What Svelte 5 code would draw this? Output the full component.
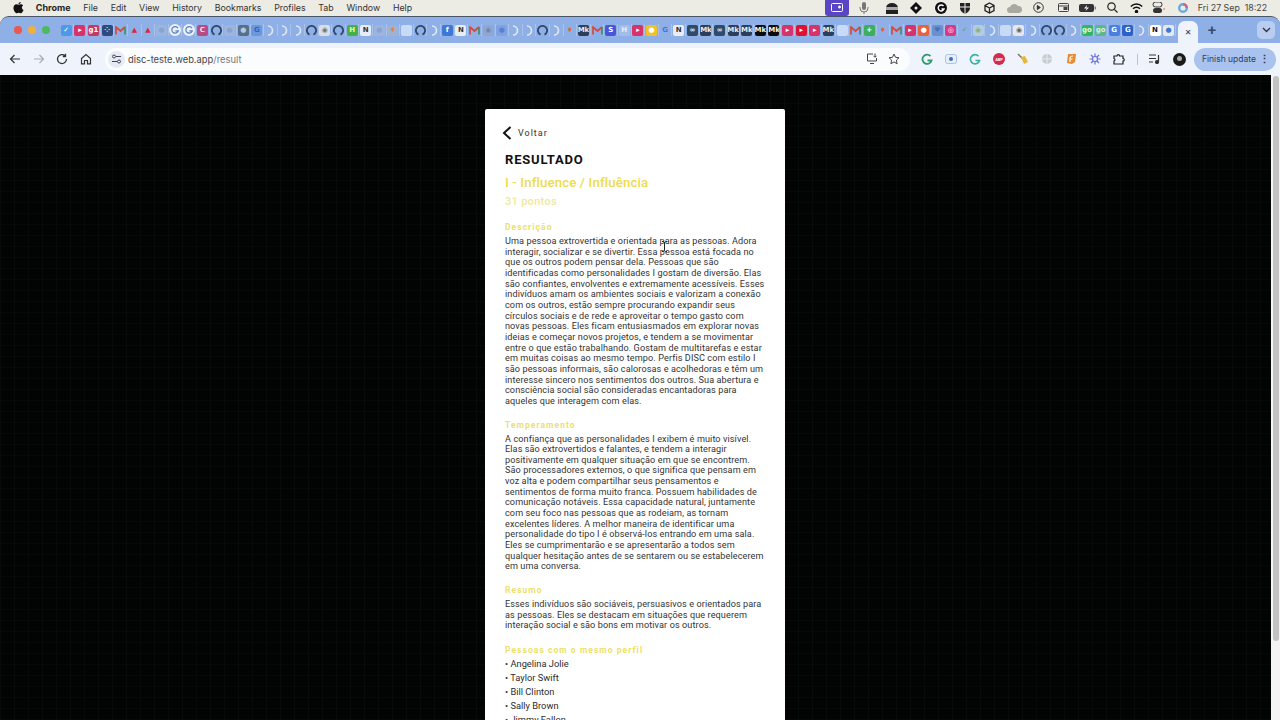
<script>
	const menu = ['File', 'Edit', 'View', 'History', 'Bookmarks', 'Profiles', 'Tab', 'Window', 'Help'];

	const sq = (bg, fg, t) => ({ k: 'sq', bg, fg, t });
	const moon = { k: 'moon' };
	const gh = { k: 'gh' };
	const dim = { k: 'dim' };
	const doc = { k: 'doc' };
	const g = { k: 'g' };
	const gmail = { k: 'gmail' };
	const mk = sq('#2b3f5c', '#e8edf2', 'Mk');
	const mkb = sq('#0c0c0c', '#f4f4e8', 'Mk');
	const yt = sq('#d8326a', '#fff', '▸');
	const notion = sq('#e8edf5', '#333', 'N');
	const inf = sq('#2f4a6b', '#dfe8f2', '∞');
	const santander = sq('#8fb0e6', '#d8283c', '▲');
	const flame = sq('#8fb0e6', '#e9662a', '♦');

	const tabs = [
		sq('#4f98e8', '#fff', '✓'), yt, sq('#c2386a', '#fff', 'g1'), sq('#2f4a7c', '#dfe8f2', '⁘'), gmail,
		santander, santander, dim, g, g, sq('#b84a86', '#f2dce8', 'C'), gh, dim, sq('#55708f', '#b8c8dc', '●'),
		sq('#6b98dc', '#2f62c4', 'G'), moon, moon, moon, gh, sq('#d8dfe8', '#777', '◉'), gh,
		sq('#45b048', '#f0f5a0', 'H'), notion, dim, sq('#9fb2d0', '#e8843c', '♦'), doc, gh, moon,
		sq('#3b78d8', '#fff', 'f'), notion, gmail, sq('#8fa8d2', '#6f87ad', '◉'), sq('#7fa2e0', '#5a80d4', '●'),
		moon, moon, gh, moon, flame, mk, gmail, sq('#4a55d8', '#fff', 'S'), sq('#a4bde8', '#e4ecf8', 'H'),
		yt, sq('#f0c428', '#fff', '●'), sq('#8fb0e6', '#3f78d8', 'G'), notion, inf, mk, inf, mk, mk, mkb, mkb,
		yt, sq('#e01030', '#fff', '▸'), yt, mk, doc, gmail, sq('#3fae5c', '#fff', '+'), flame, gmail, yt,
		sq('#e8603c', '#fff', '●'), sq('#6b90d0', '#4a70b8', '♥'), sq('#d8388c', '#fff', '◎'), sq('#8fb0e6', '#5f9a9a', '✓'),
		sq('#b4cce0', '#8cb07c', '◉'), moon, doc, sq('#e4e8ee', '#666', '◉'), moon, gh, gh, moon,
		sq('#30b860', '#e8f8e0', 'go'), sq('#5cb88a', '#d8f0e0', 'go'), sq('#4a80dc', '#fff', 'G'), sq('#2a62c8', '#fff', 'G'),
		moon, sq('#fff', '#111', 'N'), sq('#e8e8e8', '#3b78d8', '●')
	];

	const status = [
		{ x: 'mic' }, { x: 'badge' }, { x: 'diamond' }, { x: 'grammarly' }, { x: 'shield' }, { x: 'box' },
		{ x: 'cloud' }, { x: 'play' }, { x: 'window' }, { x: 'battery' }, { x: 'search' }, { x: 'wifi' },
		{ x: 'control' }, { x: 'siri' }
	];

	const description =
		'Uma pessoa extrovertida e orientada para as pessoas. Adora interagir, socializar e se divertir. Essa pessoa está focada no que os outros podem pensar dela. Pessoas que são identificadas como personalidades I gostam de diversão. Elas são confiantes, envolventes e extremamente acessíveis. Esses indivíduos amam os ambientes sociais e valorizam a conexão com os outros, estão sempre procurando expandir seus círculos sociais e de rede e aproveitar o tempo gasto com novas pessoas. Eles ficam entusiasmados em explorar novas ideias e começar novos projetos, e tendem a se movimentar entre o que estão trabalhando. Gostam de multitarefas e estar em muitas coisas ao mesmo tempo. Perfis DISC com estilo I são pessoas informais, são calorosas e acolhedoras e têm um interesse sincero nos sentimentos dos outros. Sua abertura e consciência social são consideradas encantadoras para aqueles que interagem com elas.';
	const temperament =
		'A confiança que as personalidades I exibem é muito visível. Elas são extrovertidos e falantes, e tendem a interagir positivamente em qualquer situação em que se encontrem. São processadores externos, o que significa que pensam em voz alta e podem compartilhar seus pensamentos e sentimentos de forma muito franca. Possuem habilidades de comunicação notáveis. Essa capacidade natural, juntamente com seu foco nas pessoas que as rodeiam, as tornam excelentes líderes. A melhor maneira de identificar uma personalidade do tipo I é observá-los entrando em uma sala. Eles se cumprimentarão e se apresentarão a todos sem qualquer hesitação antes de se sentarem ou se estabelecerem em uma conversa.';
	const summary =
		'Esses indivíduos são sociáveis, persuasivos e orientados para as pessoas. Eles se destacam em situações que requerem interação social e são bons em motivar os outros.';
	const people = ['Angelina Jolie', 'Taylor Swift', 'Bill Clinton', 'Sally Brown', 'Jimmy Fallon'];
</script>

<div class="screen">
	<header class="menubar">
		<svg class="apple" width="11" height="13" viewBox="0 0 24 28" fill="#111"><path d="M17 2c0 2-2 5-5 5 0-3 2-5 5-5zM12 8c1.500 0 3-1.200 5-1.200 2 0 4 1 5 2.800-4 2.400-3.400 8 1 10-1 3-3.500 7-6 7-1.500 0-2.500-1-4.200-1-1.800 0-2.800 1-4.300 1C5 26.600 1 20 1 15c0-5 3-8 6.500-8 1.800 0 3 1 4.500 1z"/></svg>
		<strong>Chrome</strong>
		{#each menu as item}<span>{item}</span>{/each}
		<div class="status">
			<span class="meet"><svg width="12" height="9" viewBox="0 0 12 9" fill="none" stroke="#fff"><rect x=".5" y=".5" width="11" height="8" rx="1"/><circle cx="8.500" cy="4" r="1" fill="#fff"/></svg></span>
			{#each status as s}
				<span class="st {s.x}">
					{#if s.x === 'mic'}
						<svg width="10" height="12" viewBox="0 0 10 12" fill="#777"><rect x="3" y="0" width="4" height="8" rx="2"/><path d="M1 5v1a4 4 0 0 0 8 0V5M5 10v2" stroke="#777" fill="none"/></svg>
					{:else if s.x === 'badge'}
						<svg width="14" height="12" viewBox="0 0 14 12"><path d="M1 6a6 5 0 0 1 12 0v6H1z" fill="#222"/><rect x="1" y="5" width="12" height="3" fill="#aaa"/></svg>
					{:else if s.x === 'diamond'}
						<svg width="12" height="12" viewBox="0 0 12 12"><path d="M6 0l6 6-6 6-6-6z" fill="#111"/><circle cx="6" cy="6" r="1.500" fill="#eee"/></svg>
					{:else if s.x === 'grammarly'}
						<svg width="12" height="12" viewBox="0 0 12 12"><circle cx="6" cy="6" r="6" fill="#111"/><path d="M8.500 4A3 3 0 1 0 9 7H6.500" stroke="#fff" fill="none" stroke-width="1.400"/></svg>
					{:else if s.x === 'shield'}
						<svg width="12" height="12" viewBox="0 0 12 12"><path d="M1 1h10v5c0 3-3 5-5 6-2-1-5-3-5-6z" fill="#222"/><path d="M6 1v11M1 5h10" stroke="#eee"/></svg>
					{:else if s.x === 'box'}
						<svg width="11" height="12" viewBox="0 0 11 12" fill="none" stroke="#222" stroke-width="1.300"><path d="M5.500 1l4.500 2.500v5L5.500 11 1 8.500v-5zM1 3.500L5.500 6 10 3.500M5.500 6v5"/></svg>
					{:else if s.x === 'cloud'}
						<svg width="17" height="10" viewBox="0 0 17 10"><path d="M4 10a3 3 0 0 1 0-6 4.500 4.500 0 0 1 8-1 3.500 3.500 0 0 1 1 7z" fill="#a9a9a4"/></svg>
					{:else if s.x === 'play'}
						<svg width="11" height="11" viewBox="0 0 11 11" fill="none" stroke="#333"><circle cx="5.500" cy="5.500" r="4.800"/><path d="M4.300 3.400l3 2.100-3 2.100z" fill="#333"/></svg>
					{:else if s.x === 'window'}
						<svg width="11" height="9" viewBox="0 0 11 9" fill="none" stroke="#444"><rect x=".5" y=".5" width="10" height="8" rx="1"/><path d="M.5 3h10"/><rect x="6" y="4.500" width="3" height="2" fill="#444"/></svg>
					{:else if s.x === 'battery'}
						<svg width="17" height="8" viewBox="0 0 17 8"><rect width="15" height="8" rx="2" fill="#333"/><rect x="15.500" y="2.500" width="1.500" height="3" fill="#888"/><path d="M8 1L5 4.500h2.500L6.500 7l3.500-3.500H7.500z" fill="#eee"/></svg>
					{:else if s.x === 'search'}
						<svg width="11" height="11" viewBox="0 0 11 11" fill="none" stroke="#222" stroke-width="1.200"><circle cx="4.500" cy="4.500" r="3.700"/><path d="M7.300 7.300L10.500 10.500"/></svg>
					{:else if s.x === 'wifi'}
						<svg width="13" height="10" viewBox="0 0 13 10" fill="none" stroke="#111" stroke-width="1.500"><path d="M.8 3.500a8 8 0 0 1 11.400 0M3 5.800a5 5 0 0 1 7 0"/><circle cx="6.500" cy="8.500" r="1" fill="#111"/></svg>
					{:else if s.x === 'control'}
						<svg width="13" height="11" viewBox="0 0 13 11"><rect x="1" y="0" width="9" height="5" rx="2.500" fill="none" stroke="#333"/><rect x="1" y="6" width="9" height="5" rx="2.500" fill="#333"/><circle cx="12" cy="7" r="1" fill="#e9a06a"/></svg>
					{:else}
						<svg width="10" height="10" viewBox="0 0 10 10" fill="none" stroke-width="2.400"><circle cx="5" cy="5" r="3.800" stroke="#6aa8dc"/><path d="M5 1.200A3.800 3.800 0 0 1 8.800 5" stroke="#d8608c"/></svg>
					{/if}
				</span>
			{/each}
			<span class="clock">Fri 27 Sep&nbsp;&nbsp;18:22</span>
		</div>
	</header>

	<section class="tabstrip">
		<div class="lights"><i class="red"></i><i class="amber"></i><i class="green"></i></div>
		<div class="favicons">
			{#each tabs as t}
				<span class="fav">
					{#if t.k === 'sq'}
						<b style="background:{t.bg};color:{t.fg}">{t.t}</b>
					{:else if t.k === 'moon'}
						<svg width="10" height="11" viewBox="0 0 10 11" fill="none" stroke="#dfe8f6" stroke-width="1.600"><path d="M3 1a4.500 4.500 0 0 1 0 9"/></svg>
					{:else if t.k === 'gh'}
						<svg width="11" height="11" viewBox="0 0 11 11" fill="none" stroke="#2f4668" stroke-width="1.800"><path d="M3.500 9.600a4.600 4.600 0 1 1 4 0"/></svg>
					{:else if t.k === 'dim'}
						<b style="background:#9cb5e0;color:#8aa3cc">●</b>
					{:else if t.k === 'doc'}
						<b style="background:#c8daf5;color:#c8daf5"> </b>
					{:else if t.k === 'g'}
						<svg width="12" height="12" viewBox="0 0 12 12"><circle cx="6" cy="6" r="6" fill="#edf1f6"/><path d="M9 4.200A3.300 3.300 0 1 0 9.300 6.800H6.300" fill="none" stroke="#5f86c4" stroke-width="1.300"/></svg>
					{:else}
						<svg width="11" height="9" viewBox="0 0 11 9" fill="none" stroke-width="1.700"><path d="M1 8.500V1l4.500 4L10 1" stroke="#d8483c"/><path d="M10 1v7.500" stroke="#3f8f68"/></svg>
					{/if}
				</span>
			{/each}
		</div>
		<div class="active-tab">✕</div>
		<div class="plus">+</div>
		<div class="chev"><svg width="9" height="6" viewBox="0 0 9 6" fill="none" stroke="#334" stroke-width="1.400"><path d="M1 1l3.500 3.500L8 1"/></svg></div>
	</section>

	<nav class="toolbar">
		<div class="navs">
			<svg width="12" height="12" viewBox="0 0 12 12" fill="none" stroke="#333" stroke-width="1.200"><path d="M11 6H1.500M5.500 2L1.500 6l4 4"/></svg>
			<svg width="12" height="12" viewBox="0 0 12 12" fill="none" stroke="#a6adb8" stroke-width="1.200"><path d="M1 6h9.500M6.500 2l4 4-4 4"/></svg>
			<svg width="12" height="12" viewBox="0 0 12 12" fill="none" stroke="#333" stroke-width="1.300"><path d="M10.500 6A4.500 4.500 0 1 1 9 2.700M9.500.8v2.700H6.800"/></svg>
			<svg width="12" height="12" viewBox="0 0 12 12" fill="none" stroke="#333" stroke-width="1.200"><path d="M1.500 5.500L6 1.500l4.500 4v5.300H7.500V7.500h-3v3.300h-3z"/></svg>
		</div>
		<div class="omnibox">
			<span class="tune"><svg width="11" height="10" viewBox="0 0 11 10" fill="none" stroke="#445" stroke-width="1"><circle cx="3" cy="2.500" r="1.500"/><path d="M5 2.500h5M1 7.500h5"/><circle cx="8" cy="7.500" r="1.500"/></svg></span>
			<span class="url">disc-teste.web.app<em>/result</em></span>
			<span class="omni-icons">
				<svg width="12" height="11" viewBox="0 0 12 11" fill="none" stroke="#444"><path d="M7 1H1.500v7h9V5M4 10.500h4M9 .5v3.500M7.500 2.800L9 4.300l1.500-1.500"/></svg>
				<svg width="12" height="12" viewBox="0 0 12 12" fill="none" stroke="#444"><path d="M6 1l1.500 3.300 3.500.4-2.600 2.400.7 3.600L6 8.900l-3.100 1.800.7-3.600L1 4.700l3.500-.4z"/></svg>
			</span>
		</div>
		<div class="exts">
			<svg width="12" height="12" viewBox="0 0 12 12"><path d="M9.500 3.200A4.600 4.600 0 1 0 10.500 7.500H6.500" fill="none" stroke="#2f9a6c" stroke-width="1.800"/></svg>
			<svg width="12" height="10" viewBox="0 0 12 10"><rect x=".5" y=".5" width="11" height="9" rx="2" fill="#e6eef8" stroke="#a9c4e6"/><circle cx="6" cy="5" r="2" fill="#3a6fc0"/></svg>
			<svg width="12" height="12" viewBox="0 0 12 12"><path d="M9.500 3.200A4.600 4.600 0 1 0 10.500 7.500H6.500" fill="none" stroke="#35b3a0" stroke-width="1.600"/></svg>
			<span class="abp">ABP</span>
			<svg width="12" height="12" viewBox="0 0 12 12"><path d="M1 1l5 5" stroke="#776" stroke-width="1.500"/><path d="M4 4l4-1 3 6-4 2z" fill="#e5b83a"/></svg>
			<svg width="12" height="12" viewBox="0 0 12 12"><circle cx="6" cy="6" r="5" fill="#c7ccd1"/><path d="M1 6h10M6 1v10" stroke="#e8ebee"/></svg>
			<svg width="12" height="12" viewBox="0 0 12 12"><path d="M3 1h8l-1 8-3 2-5-1z" fill="#ea8a2c"/><path d="M5 9V5c0-1 1-2 3-2M4.500 6h3" stroke="#fff" fill="none" stroke-width="1.200"/></svg>
			<svg width="12" height="12" viewBox="0 0 12 12" fill="none" stroke="#6a6fd8" stroke-width="1.200"><circle cx="6" cy="6" r="2.500"/><path d="M6 .5v2.500M6 9v2.500M.5 6H3M9 6h2.500M2 2l2 2M8 8l2 2M10 2L8 4M4 8l-2 2"/></svg>
			<svg width="12" height="12" viewBox="0 0 12 12" fill="none" stroke="#222" stroke-width="1.200"><path d="M1 3h3a1.300 1.300 0 0 1 2.600 0H10v2.500a1.300 1.300 0 0 1 0 2.600V11H1V8a1.300 1.300 0 0 0 0-2.500z"/></svg>
			<i class="sep"></i>
			<svg width="12" height="10" viewBox="0 0 12 10" fill="none" stroke="#333" stroke-width="1.200"><path d="M0 1h7M0 4.500h7M0 8h4M9.500 1v7"/><circle cx="8" cy="8" r="1.500" fill="#333"/></svg>
			<svg width="13" height="13" viewBox="0 0 13 13"><circle cx="6.500" cy="6.500" r="6.500" fill="#1a1a1a"/><circle cx="6.500" cy="5.500" r="2.500" fill="#aaa"/></svg>
		</div>
		<div class="update">Finish update<span class="dots">⋮</span></div>
	</nav>

	<main class="page">
		<div class="content">
			<article class="card">
				<a class="back" href="#top">
					<svg width="10" height="14" viewBox="0 0 10 14" fill="none" stroke="#111" stroke-width="2"><path d="M8.500 1L2 7l6.500 6"/></svg>
					Voltar
				</a>
				<h1>RESULTADO</h1>
				<h2>I - Influence / Influência</h2>
				<p class="score">31 pontos</p>

				<h3>Descrição</h3>
				<p class="body">{description}</p>

				<h3>Temperamento</h3>
				<p class="body">{temperament}</p>

				<h3>Resumo</h3>
				<p class="body summary">{summary}</p>

				<h3>Pessoas com o mesmo perfil</h3>
				<ul>
					{#each people as name}<li>• {name}</li>{/each}
				</ul>
			</article>
			<svg class="cursor" width="5" height="11" viewBox="0 0 5 11" fill="none" stroke="#222"><path d="M0 .5h1.500L2.500 1.500 3.500.5H5M2.500 1.500v8M0 10.500h1.500l1-1 1 1H5"/></svg>
		</div>
		<div class="scrollbar"><div class="thumb"></div></div>
	</main>
</div>

<style>
	:global(body) {
		margin: 0;
		overflow: hidden;
	}

	.screen {
		display: flex;
		flex-direction: column;
		width: 1280px;
		height: 720px;
		overflow: hidden;
		background: #ecebe4;
		font-family: Roboto, 'Liberation Sans', sans-serif;
	}

	.menubar {
		display: flex;
		align-items: center;
		gap: 12.750px;
		height: 15px;
		padding: 0 13px 1px 13px;
		flex: none;
		font-family: Inter, sans-serif;
		font-size: 8.800px;
		color: #333;
		white-space: nowrap;
	}

	.apple {
		margin-right: -1px;
	}

	.menubar strong {
		font-weight: 700;
		color: #222;
		font-size: 9px;
	}

	.status {
		display: flex;
		align-items: center;
		margin-left: auto;
		height: 100%;
	}

	.meet {
		display: flex;
		align-items: center;
		justify-content: center;
		width: 24px;
		height: 16px;
		background: #5a45c4;
		border-radius: 0 0 3px 3px;
		margin-right: 2px;
	}

	.st {
		display: flex;
		align-items: center;
		justify-content: center;
		width: 24.500px;
	}

	.st.badge {
		margin-left: 3.500px;
	}

	.st.control {
		margin-left: -3px;
	}

	.clock {
		margin-left: 3px;
		font-family: Inter, sans-serif;
		font-size: 8.800px;
		color: #444;
	}

	.tabstrip {
		display: flex;
		align-items: center;
		height: 27px;
		flex: none;
		background: #8fb0e6;
		border-top: 1px solid #4a5668;
		border-radius: 9px 9px 0 0;
		padding: 0 5px 0 14px;
		box-sizing: border-box;
	}

	.lights {
		display: flex;
		gap: 6px;
		width: 46px;
		flex: none;
	}

	.lights i {
		width: 8px;
		height: 8px;
		border-radius: 50%;
	}

	.red { background: #e8584e; }
	.amber { background: #eeb23c; }
	.green { background: #50b860; }

	.favicons {
		display: flex;
		align-items: center;
		flex: 1;
		min-width: 0;
		height: 100%;
	}

	.fav {
		flex: 1 0 0;
		min-width: 0;
		display: flex;
		align-items: center;
		justify-content: center;
		height: 12px;
		border-right: 1px solid #a9c2ec;
	}

	.fav b {
		display: flex;
		align-items: center;
		justify-content: center;
		width: 11px;
		height: 11px;
		border-radius: 2px;
		font-size: 7px;
		line-height: 1;
		font-weight: 700;
		overflow: hidden;
		font-family: 'DejaVu Sans', sans-serif;
	}

	.active-tab {
		display: flex;
		align-items: center;
		justify-content: center;
		align-self: flex-end;
		width: 20px;
		height: 22px;
		margin-left: 2px;
		background: #eff4fc;
		border-radius: 7px 7px 0 0;
		color: #334;
		font-size: 8px;
		font-family: 'DejaVu Sans', sans-serif;
	}

	.plus {
		width: 24px;
		margin-left: 2px;
		text-align: center;
		font-size: 15px;
		font-weight: 500;
		color: #33496e;
	}

	.chev {
		display: flex;
		align-items: center;
		justify-content: center;
		width: 18px;
		height: 18px;
		margin-left: 33px;
		border-radius: 5px;
		background: #b8cdf0;
	}

	.toolbar {
		display: flex;
		align-items: center;
		height: 32px;
		flex: none;
		background: #eff4fc;
		padding-left: 9px;
		box-sizing: border-box;
	}

	.navs {
		display: flex;
		align-items: center;
		gap: 11.700px;
		width: 96px;
		flex: none;
	}

	.omnibox {
		display: flex;
		align-items: center;
		width: 805px;
		height: 23px;
		border-radius: 12px;
		background: #fbfcfe;
		flex: none;
		box-sizing: border-box;
		padding: 0 10px 0 3px;
	}

	.tune {
		display: flex;
		align-items: center;
		justify-content: center;
		width: 17px;
		height: 17px;
		border-radius: 50%;
		background: #e6ebf3;
	}

	.url {
		margin-left: 3px;
		font-family: Inter, sans-serif;
		font-size: 9.400px;
		color: #444;
	}

	.url em {
		font-style: normal;
		color: #777;
	}

	.omni-icons {
		display: flex;
		gap: 10px;
		margin-left: auto;
	}

	.exts {
		display: flex;
		align-items: center;
		gap: 12px;
		margin-left: 11px;
		flex: none;
	}

	.abp {
		display: flex;
		align-items: center;
		justify-content: center;
		width: 12px;
		height: 12px;
		border-radius: 50%;
		background: #d62a4c;
		color: #fff;
		font-size: 4px;
		font-weight: 700;
		letter-spacing: -0.1px;
	}

	.sep {
		width: 1px;
		height: 11px;
		background: #bcc4d0;
		margin-right: -1px;
	}

	.update {
		display: flex;
		align-items: center;
		justify-content: space-between;
		width: 82px;
		height: 23px;
		margin-left: 8px;
		box-sizing: border-box;
		padding: 0 6px 0 8px;
		border-radius: 12px;
		background: #a9c3ee;
		font-family: Inter, sans-serif;
		font-size: 8.500px;
		color: #2c3f5c;
		white-space: nowrap;
	}

	.dots {
		font-size: 11px;
		font-weight: 700;
	}

	.page {
		display: flex;
		flex: 1;
		min-height: 0;
		background-color: #020404;
		background-image:
			repeating-linear-gradient(90deg, rgba(30, 50, 45, 0.14) 0 1px, transparent 1px 14px),
			repeating-linear-gradient(0deg, rgba(30, 50, 45, 0.1) 0 1px, transparent 1px 11px);
	}

	.content {
		position: relative;
		flex: 1;
		display: flex;
		justify-content: center;
		align-items: flex-start;
		padding: 34px 1px 0 0;
		min-width: 0;
	}

	.card {
		width: 300px;
		flex: none;
		box-sizing: border-box;
		padding: 13px 20px 20px;
		background: #fff;
		border-radius: 2px;
		color: #222;
	}

	.back {
		display: flex;
		align-items: center;
		gap: 6px;
		height: 22px;
		color: #333;
		font-size: 9px;
		letter-spacing: 1px;
		text-decoration: none;
	}

	.back svg {
		margin-left: -3px;
	}

	h1 {
		margin: 8px 0 0;
		font-size: 13px;
		line-height: 16px;
		font-weight: 700;
		letter-spacing: 0.8px;
		color: #111;
	}

	h2 {
		margin: 7px 0 0;
		font-size: 13.300px;
		line-height: 16px;
		font-weight: 500;
		letter-spacing: 0.1px;
		color: #ecdc4e;
	}

	.score {
		margin: 4px 0 0;
		font-size: 11px;
		line-height: 14px;
		font-weight: 500;
		letter-spacing: 0.3px;
		color: #f0e8a0;
	}

	h3 {
		margin: 12px 0 0;
		font-size: 8.500px;
		line-height: 12px;
		font-weight: 700;
		letter-spacing: 1.050px;
		color: #ecdf6a;
	}

	.body {
		margin: 3px 0 12px;
		font-size: 9.100px;
		line-height: 10.660px;
		color: #333;
		letter-spacing: 0.1px;
	}

	.body.summary {
		margin-bottom: 13px;
	}

	.body + h3 {
		margin-top: 0;
	}

	ul {
		list-style: none;
		margin: 1px 0 0;
		padding: 0;
		font-size: 9.300px;
		line-height: 14px;
		color: #2c2c2c;
	}

	.cursor {
		position: absolute;
		left: 662px;
		top: 166px;
	}

	.scrollbar {
		width: 9px;
		flex: none;
		background: #f4f4f4;
		box-sizing: border-box;
		padding: 1px 1px 0 2px;
	}

	.thumb {
		height: 565px;
		background: #c2c2c2;
		border-radius: 3px;
	}
</style>
